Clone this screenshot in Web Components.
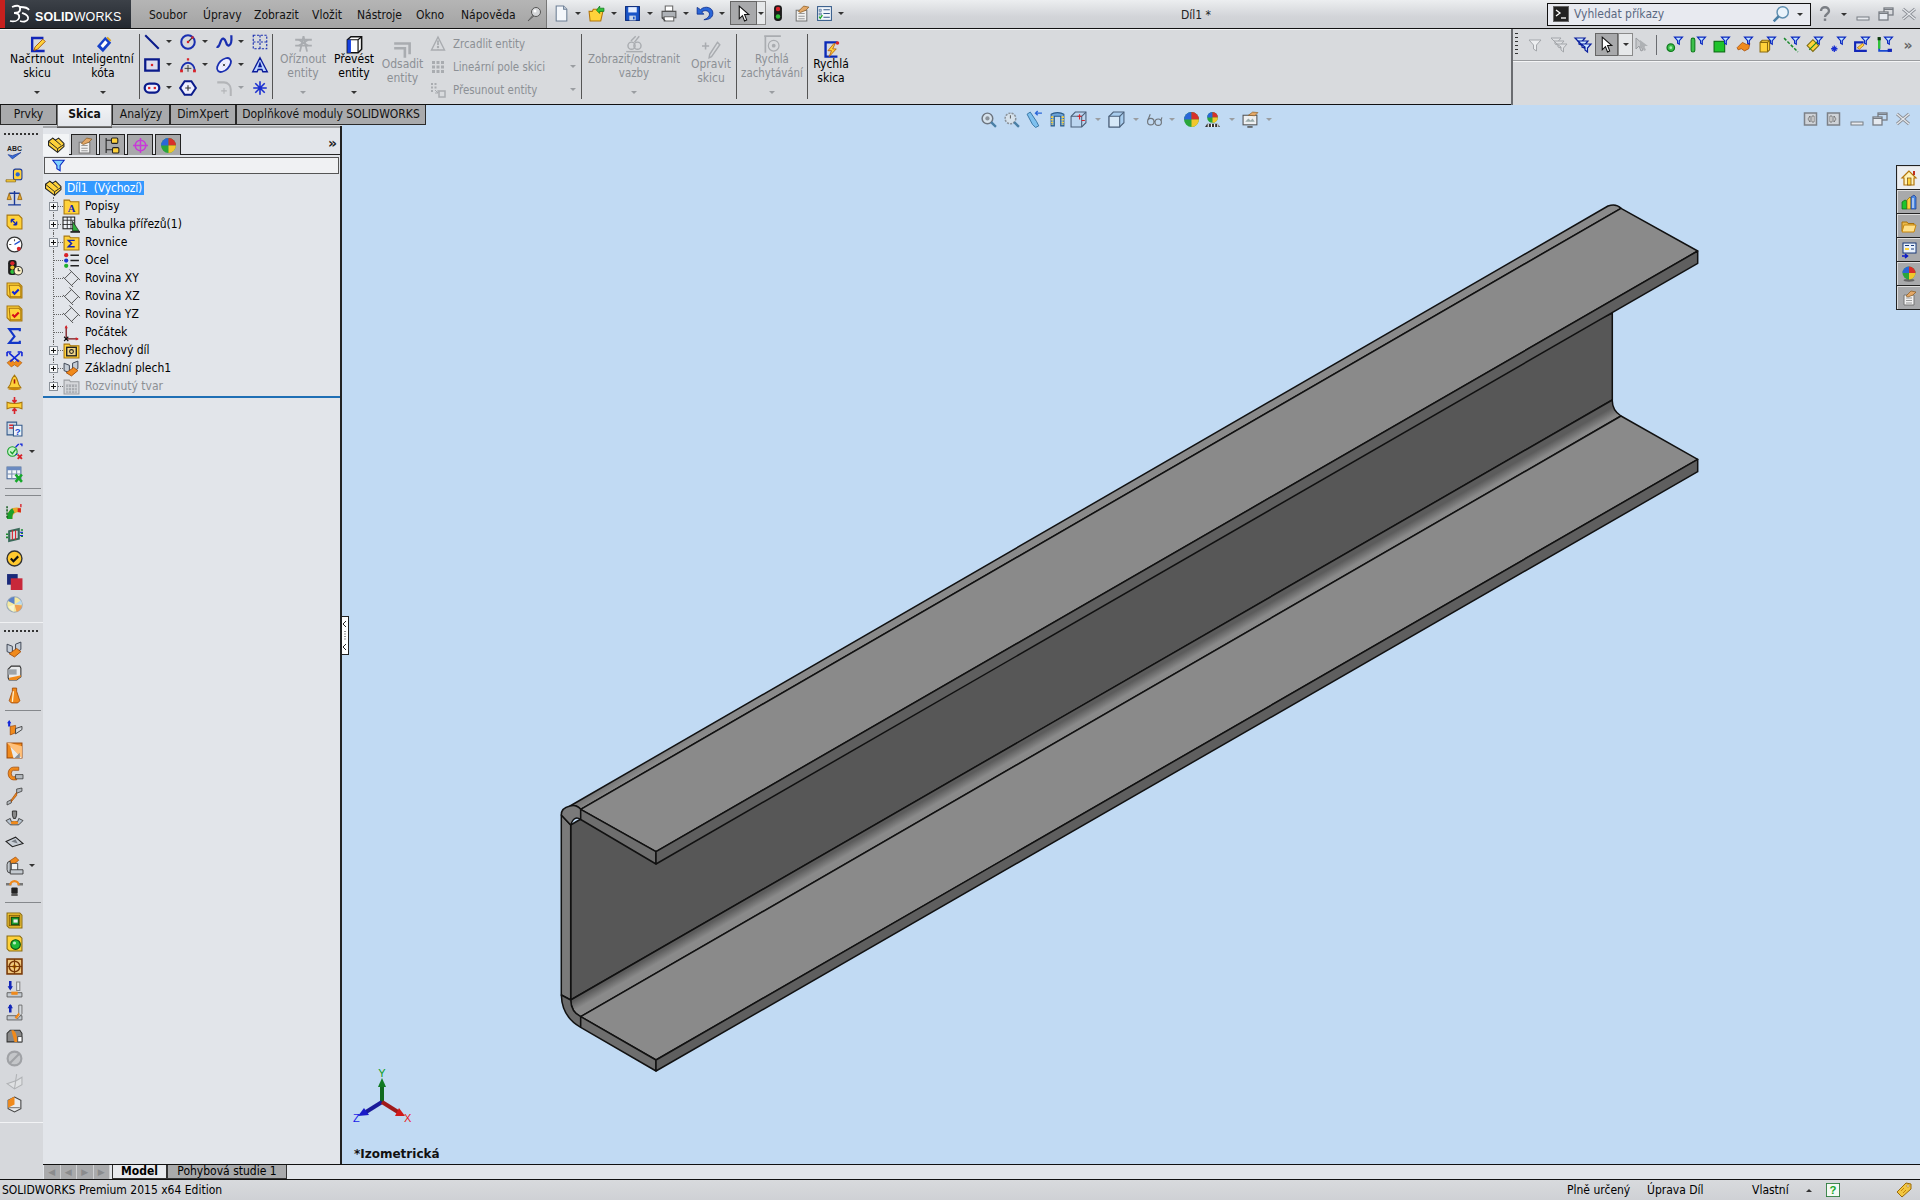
<!DOCTYPE html>
<html lang="cs">
<head>
<meta charset="utf-8">
<title>SOLIDWORKS</title>
<style>
  html, body { margin: 0; height: 100%; overflow: hidden; background: #d8dadd; }
  body { font: 12px "DejaVu Sans Condensed", "DejaVu Sans", sans-serif; color: #000; }
</style>
</head>
<body>

<sw-app>
  <sw-titlebar slot="title"></sw-titlebar>
  <sw-ribbon slot="ribbon"></sw-ribbon>
  <sw-filterbar slot="filter"></sw-filterbar>
  <sw-tabs slot="tabs"></sw-tabs>
  <sw-rail slot="rail">
    <sw-grip></sw-grip>
    <sw-tool name="abc"></sw-tool><sw-tool name="tape"></sw-tool><sw-tool name="scales"></sw-tool>
    <sw-tool name="section"></sw-tool><sw-tool name="gauge"></sw-tool><sw-tool name="lightclock"></sw-tool>
    <sw-tool name="chkblue"></sw-tool><sw-tool name="chkred"></sw-tool><sw-tool name="sigma"></sw-tool>
    <sw-tool name="cross"></sw-tool><sw-tool name="bell"></sw-tool><sw-tool name="squeeze"></sw-tool>
    <sw-tool name="docq"></sw-tool><sw-tool name="checkx" menu></sw-tool><sw-tool name="xltable"></sw-tool>
    <sw-rule style="margin-top:2px"></sw-rule><sw-rule style="margin-top:6px;margin-bottom:5px"></sw-rule>
    <sw-tool name="rainbow"></sw-tool><sw-tool name="greenbox"></sw-tool><sw-tool name="yescircle"></sw-tool>
    <sw-tool name="twosq"></sw-tool><sw-tool name="ball"></sw-tool>
    <sw-rule wide style="margin-top:6px"></sw-rule><sw-grip style="height:15px"></sw-grip>
    <sw-tool name="base"></sw-tool><sw-tool name="cube"></sw-tool><sw-tool name="cone"></sw-tool>
    <sw-rule style="margin-top:3px;margin-bottom:5px"></sw-rule>
    <sw-tool name="flangeup"></sw-tool><sw-tool name="miter"></sw-tool><sw-tool name="hem"></sw-tool>
    <sw-tool name="jog"></sw-tool><sw-tool name="form"></sw-tool><sw-tool name="diamond"></sw-tool>
    <sw-tool name="corner" menu></sw-tool><sw-tool name="clamp"></sw-tool>
    <sw-rule style="margin-top:2px;margin-bottom:6px"></sw-rule>
    <sw-tool name="yelgreen"></sw-tool><sw-tool name="yelball"></sw-tool><sw-tool name="vent"></sw-tool>
    <sw-tool name="unfold"></sw-tool><sw-tool name="fold"></sw-tool><sw-tool name="flatten"></sw-tool>
    <sw-tool name="nocut"></sw-tool><sw-tool name="ghostfold"></sw-tool><sw-tool name="hexorange"></sw-tool>
    <sw-rule wide style="margin-top:6px;background:#f2f3f5"></sw-rule>
  </sw-rail>
  <sw-tree slot="tree">
    <sw-tree-row root icon="part" label="Díl1  (Výchozí)"></sw-tree-row>
    <sw-tree-row plus icon="folderA" label="Popisy"></sw-tree-row>
    <sw-tree-row plus icon="cutlist" label="Tabulka přířezů(1)"></sw-tree-row>
    <sw-tree-row plus icon="folderS" label="Rovnice"></sw-tree-row>
    <sw-tree-row icon="material" label="Ocel"></sw-tree-row>
    <sw-tree-row icon="plane" label="Rovina XY"></sw-tree-row>
    <sw-tree-row icon="plane" label="Rovina XZ"></sw-tree-row>
    <sw-tree-row icon="plane" label="Rovina YZ"></sw-tree-row>
    <sw-tree-row icon="origin" label="Počátek"></sw-tree-row>
    <sw-tree-row plus icon="folderSheet" label="Plechový díl"></sw-tree-row>
    <sw-tree-row plus icon="base" label="Základní plech1"></sw-tree-row>
    <sw-tree-row plus last muted icon="flatgrey" label="Rozvinutý tvar"></sw-tree-row>
  </sw-tree>
  <sw-viewport slot="view"></sw-viewport>
  <sw-bottomtabs slot="bottom"></sw-bottomtabs>
  <sw-status slot="status"></sw-status>
</sw-app>

<script>
// all the small pictures, drawn on a 16 unit grid
const K = "#111", B = "#1226b8", Y = "#ffd23a", O = "#f08a1c", G = "#1fae2c", R = "#d8232a", W = "#fff", S = "#9aa0a6";
const funnel = `<path d="M8 1h7.5l-3 3.4v3.4l-1.6-1V4.4z" fill="#bfe3ff" stroke="#0a28c0" stroke-width="1.1"/>`;
const ICONS = {
  sketch: `<path d="M13 2.5H3.5v11H14" fill="none" stroke="${B}" stroke-width="2"/><path d="M6 10l6.5-6.5 2 2L8 12l-3 1z" fill="${Y}" stroke="#a8560c" stroke-width=".8"/>`,
  dim: `<path d="M9.5 1.5l5 5-7 8-5-5z" fill="#1540c8"/><path d="M9.5 4.5l2 2-4 4.500-2-2z" fill="${W}"/><path d="M11 2l3 3" stroke="#d9a21c" stroke-width="1.600"/>`,
  line: `<path d="M2 2l12 12" stroke="#0a1a8a" stroke-width="1.800"/>`,
  circle: `<circle cx="8" cy="8" r="6" fill="none" stroke="#1a2fb0" stroke-width="1.800"/><path d="M8 8l4-4" stroke="#333"/><rect x="7" y="7" width="2" height="2" fill="${R}"/><rect x="11" y="3" width="2" height="2" fill="${R}"/>`,
  spline: `<path d="M1.500 12c3 2 3-8 6-7s2 7 5 6 2-8 2-9" fill="none" stroke="#1a2fb0" stroke-width="2"/>`,
  dashed: `<rect x="2" y="2" width="12" height="12" fill="none" stroke="#1a2fb0" stroke-dasharray="2 1.300"/><path d="M2 8h12M8 2v12" stroke="#1a2fb0" stroke-dasharray="2 1.300"/>`,
  rect: `<rect x="2" y="3" width="12" height="10" fill="#dde" stroke="#0a1a8a" stroke-width="2"/><rect x="7" y="7" width="2" height="2" fill="${R}"/>`,
  arc: `<path d="M2 13a6 7 0 0 1 12 0" fill="none" stroke="#1a2fb0" stroke-width="1.600"/><path d="M8 8v6M5 11h6" stroke="#333" stroke-width=".8"/><rect x="1" y="12" width="2.500" height="2.500" fill="${R}"/><rect x="12.500" y="12" width="2.500" height="2.500" fill="${R}"/><rect x="7" y="2" width="2" height="2" fill="${R}"/>`,
  ellipse: `<ellipse cx="8" cy="8" rx="7.500" ry="4.500" transform="rotate(-45 8 8)" fill="#eef" stroke="#1a2fb0" stroke-width="1.600"/><path d="M7 7l2 2M9 7l-2 2" stroke="#444" stroke-width=".8"/>`,
  textA: `<path d="M8 1.500L14.500 14h-4L9.700 12H6.300l-.8 2h-4zM8 6.500l-1 3h2z" fill="#bcd4ff" stroke="#0a1a9a" stroke-width="1.200"/>`,
  slot: `<rect x="1.500" y="4" width="13" height="8" rx="4" fill="#eef" stroke="#0a1a8a" stroke-width="2"/><rect x="4.500" y="7" width="2" height="2" fill="${R}"/><rect x="9.500" y="7" width="2" height="2" fill="${R}"/>`,
  poly: `<path d="M5 2h6l4 6-4 6H5L1 8z" fill="#eef" stroke="#0a1a8a" stroke-width="1.800"/><path d="M8 5.500v5M5.500 8h5" stroke="#333"/>`,
  fillet: `<path d="M2 3h6a6 6 0 0 1 6 6v6" fill="none" stroke="#b3b5b8" stroke-width="1.800"/><path d="M8 8v5M5.500 10.500h5" stroke="#b3b5b8"/>`,
  star: `<path d="M8 2v12M2 8h12M3.800 3.800l8.400 8.400M12.200 3.800l-8.400 8.400" stroke="#1a2fd0" stroke-width="1.400"/>`,
  trim: `<g stroke="#a9acb0" fill="none" stroke-width="1.500"><path d="M1 4h14M1 9h14M8 1l-3 13M8 1l3 13"/><path d="M4 4l8 5M12 4l-8 5"/></g>`,
  convert: `<path d="M2 4l3-2.500h9V12l-3 3H2z" fill="${W}" stroke="#111" stroke-width="1.300"/><path d="M2 4h9v11M11 4l3-2.500" fill="none" stroke="#111"/><path d="M2 4h3v11H2z" fill="#1540e0"/>`,
  offset: `<path d="M1 3h13v9M1 7h9v8" fill="none" stroke="#a9acb0" stroke-width="2.200"/>`,
  mirror: `<path d="M8 1L1.500 14h13z" fill="none" stroke="#a9acb0" stroke-width="1.400"/><path d="M8 1v13" stroke="#a9acb0" stroke-dasharray="2 1"/><circle cx="8" cy="11" r="1.200" fill="#a9acb0"/><path d="M7.200 5h1.600v4H7.200z" fill="#a9acb0"/>`,
  pattern: `<g fill="#a9acb0"><rect x="2" y="2" width="3" height="3"/><rect x="6.500" y="2" width="3" height="3"/><rect x="11" y="2" width="3" height="3"/><rect x="2" y="6.500" width="3" height="3"/><rect x="6.500" y="6.500" width="3" height="3"/><rect x="11" y="6.500" width="3" height="3"/><rect x="2" y="11" width="3" height="3"/><rect x="6.500" y="11" width="3" height="3"/><rect x="11" y="11" width="3" height="3"/></g>`,
  moveent: `<g fill="#a9acb0"><rect x="1" y="1" width="2" height="2"/><rect x="4.500" y="1" width="2" height="2"/><rect x="1" y="4.500" width="2" height="2"/><rect x="4.500" y="4.500" width="2" height="2"/><rect x="1" y="8" width="2" height="2"/></g><rect x="9" y="9" width="6" height="6" fill="none" stroke="#a9acb0" stroke-width="1.500"/><path d="M5 8l3 3m0-3v3H5" fill="none" stroke="#a9acb0"/>`,
  relations: `<g fill="none" stroke="#a9acb0" stroke-width="1.200"><path d="M1 14h14"/><circle cx="5.500" cy="9" r="3"/><circle cx="10.500" cy="9" r="3"/><path d="M5 5L9 1M8 6l4-5"/></g>`,
  repair: `<path d="M3 2v6M0 5h6" stroke="#a9acb0" stroke-width="1.300"/><path d="M13 2l2 2-7 10-2 1 .5-3z" fill="none" stroke="#a9acb0" stroke-width="1.200"/>`,
  snap: `<path d="M1 1h14M2 1v14" stroke="#a9acb0" stroke-width="1.400"/><circle cx="9" cy="9" r="4.500" fill="none" stroke="#a9acb0"/><circle cx="9" cy="9" r="1.600" fill="#a9acb0"/>`,
  rapid: `<path d="M13 2H3v12h10" fill="none" stroke="#0a2ab8" stroke-width="2"/><path d="M10 3L5 9h3l-2 5 6-6.500H9l2-4.500z" fill="${Y}" stroke="#b55c0a" stroke-width=".7"/><circle cx="13" cy="2.500" r="1.500" fill="${R}"/>`,
  newdoc: `<path d="M3 1h7l3 3v11H3z" fill="#f4f7fb" stroke="#6d7f95"/><path d="M10 1v3h3" fill="#cfd8e3" stroke="#6d7f95"/>`,
  open: `<path d="M1 6h3l1-2h4l1 2h4l-2 9H2z" fill="${Y}" stroke="#b4760c"/><path d="M8 5l3-4v2h4v3h-4v2z" fill="#2fc23a" stroke="#0f7a1a" stroke-width=".7"/>`,
  save: `<rect x="1.500" y="1.500" width="13" height="13" fill="#1a55c8" stroke="#0a2a7a"/><rect x="4" y="2" width="8" height="5" fill="#e6efff"/><rect x="5" y="10" width="6" height="4.500" fill="#c8d4e6"/><rect x="8.500" y="11" width="1.500" height="2.500" fill="#1a55c8"/>`,
  print: `<path d="M4 1h7v5H4z" fill="${W}" stroke="#666"/><path d="M1 6h13v6H1z" fill="#aeb2b7" stroke="#555"/><path d="M3 11h9v4H3z" fill="${W}" stroke="#666"/><path d="M1 12l3 3" stroke="#444"/>`,
  undo: `<path d="M1 3v6h6L5 7c3-2 7-1 7 2 0 2-2 4-5 5 5 0 8-2 8-6 0-5-7-7-11-3z" fill="#2a66d8" stroke="#0a2a8a" stroke-width=".7"/>`,
  cursor: `<path d="M4 1v12l3-3 2 5 2-1-2-5h4z" fill="${W}" stroke="#111"/>`,
  light: `<rect x="4.500" y="1" width="7" height="14" rx="3" fill="#1b1b1b"/><circle cx="8" cy="4.500" r="2" fill="#d8232a"/><circle cx="8" cy="11" r="2" fill="#2fc23a"/>`,
  options: `<path d="M3 5h10v10H3z" fill="#f1f1f1" stroke="#777"/><path d="M5 8h6M5 10.500h6M5 13h6" stroke="#999"/><path d="M5 6l5-5 5 1-3 3-5 2z" fill="#e3a868" stroke="#8a5a20" stroke-width=".7"/>`,
  checklist: `<rect x="1.500" y="1.500" width="13" height="13" fill="#f2f6fb" stroke="#345a8a"/><path d="M7 4.500h6M7 8h6M7 11.500h6" stroke="#345a8a"/><path d="M3 4h2v2H3zM3 7.500h2v2H3z" fill="#bcd" stroke="#345a8a" stroke-width=".5"/><path d="M3 11l1 1.500 2-3" fill="none" stroke="${G}" stroke-width="1.300"/>`,
  pin: `<circle cx="10" cy="6" r="4.500" fill="#d4d6d8" stroke="#555"/><path d="M7 9l-5 6 6-5" fill="#888" stroke="#555" stroke-width=".7"/><circle cx="9" cy="5" r="1.500" fill="${W}"/>`,
  terminal: `<rect x=".5" y=".5" width="15" height="15" fill="#222" stroke="#666"/><path d="M3 4l4 3-4 3" fill="none" stroke="${W}" stroke-width="1.300"/><path d="M8 12h5" stroke="${W}" stroke-width="1.300"/>`,
  search: `<circle cx="9.500" cy="6.500" r="5" fill="#e9f3fb" stroke="#5f8fb0" stroke-width="1.300"/><path d="M6 10l-4.500 4.500" stroke="#4a7fa5" stroke-width="2.200"/>`,
  help: `<path d="M4 5c0-5 8-5 8 0 0 3-4 3-4 6" fill="none" stroke="#7a7e84" stroke-width="2.400"/><rect x="6.800" y="12.500" width="2.400" height="2.400" fill="#7a7e84"/>`,
  winmin: `<rect x="2" y="11" width="12" height="3" fill="#e8eaee" stroke="#777c83"/>`,
  winmax: `<rect x="6" y="2" width="9" height="7" fill="none" stroke="#777c83" stroke-width="1.300"/><rect x="1" y="6" width="9" height="8" fill="#e6eaf0" stroke="#777c83" stroke-width="1.300"/><path d="M1 7.500h9M6 3.500h9" stroke="#777c83"/>`,
  winx: `<path d="M2 3l12 10M14 3L2 13" stroke="#8c9097" stroke-width="3"/><path d="M2 3l12 10M14 3L2 13" stroke="#e6e8ec" stroke-width="1.200"/>`,
  panelL: `<rect x="1.500" y="2" width="12" height="12" fill="#cfd3d8" stroke="#7c8188" stroke-width="1.500"/><path d="M7 5L5 8l2 3zM9 5h2v6H9z" fill="${W}" stroke="#555" stroke-width=".7"/>`,
  panelR: `<rect x="1.500" y="2" width="12" height="12" fill="#cfd3d8" stroke="#7c8188" stroke-width="1.500"/><path d="M8 5l2 3-2 3zM4 5h2v6H4z" fill="${W}" stroke="#555" stroke-width=".7"/>`,
  fgrey: `<path d="M2 3h12l-4.500 5v6l-3-2V8z" fill="#eceef0" stroke="#a3a6aa"/>`,
  fgrey2: `<g fill="#dfe1e4" stroke="#a3a6aa"><path d="M0 1h10L6.500 5v3L4 7V5z"/><path d="M3 4h10L9.500 8v3L7 10V8z"/><path d="M6 7h10l-3.500 4v4L10 13v-3z"/></g>`,
  fblue: `<g fill="#cfe9ff" stroke="#0a1f9e" stroke-width="1.200"><path d="M0 1h10L6.500 5v3L4 7V5z"/><path d="M3 4h10L9.500 8v3L7 10V8z"/><path d="M6 7h10l-3.500 4v4L10 13v-3z"/></g>`,
  cursorg: `<path d="M2 1v11l3-3 2 5 2-1-2-4h4z" fill="#c6c8cb" stroke="#9a9da1"/><path d="M6 3v9l2-2 2 4 2-1-2-4h4z" fill="#aeb1b4"/>`,
  fvertex: `<circle cx="4.500" cy="11" r="3.500" fill="#3cc04a" stroke="#0e7a1c" stroke-width="1.200"/><circle cx="4.500" cy="11" r="1.300" fill="#a8eeb0"/>${funnel}`,
  fedge: `<rect x="2" y="2" width="3.500" height="13" rx="1.700" fill="#3cc04a" stroke="#0e7a1c"/>${funnel}`,
  fface: `<rect x="1" y="5" width="10" height="10" fill="#1fc42c" stroke="#0a6a12"/>${funnel}`,
  fflag: `<path d="M1 11l5-5 4 2 3-1-1 5-4 2-3-2-3 1z" fill="${O}" stroke="#a04a08" stroke-width=".7"/>${funnel}`,
  fbody: `<path d="M1 6l2-2h7v9l-2 2H1z" fill="${Y}" stroke="#8a6a10"/><path d="M1 6h7v9M8 6l2-2" fill="none" stroke="#8a6a10"/>${funnel}`,
  faxis: `<path d="M1 2l13 13" stroke="#1a8a2c" stroke-width="1.400" stroke-dasharray="3 1.500"/>${funnel}`,
  fplane: `<path d="M1 9l5.500-5.500L12 9l-5.500 5.500z" fill="${Y}" stroke="#7a6a10"/><path d="M3 13L11 5" stroke="#168a28"/>${funnel}`,
  fstar: `<path d="M5 9v6M2 12h6M3 10l4 4M7 10l-4 4" stroke="#1a2fd0" stroke-width="1.200"/>${funnel}`,
  fsketch: `<path d="M10 6H2v8h11" fill="none" stroke="#1226b8" stroke-width="2"/><path d="M4 11l5-4 1.500 1.500L6 12.500z" fill="${Y}" stroke="#a8560c" stroke-width=".6"/>${funnel}`,
  fpath: `<path d="M3 2v12h10" fill="none" stroke="#1a4ad0" stroke-width="1.800"/><path d="M3 2v10" stroke="#2fc23a" stroke-width="2.200"/><rect x="1.500" y="1" width="3" height="3" fill="#0a3a0a"/><rect x="11" y="12" width="4" height="3" fill="#1226b8"/>${funnel}`,
  zfit: `<circle cx="7" cy="7" r="5" fill="#d6e2ec" stroke="#6e7680" stroke-width="1.400"/><circle cx="7" cy="7" r="2" fill="#8b939b"/><path d="M10.500 10.500l4.500 4.500" stroke="#4a7fa5" stroke-width="2.200"/>`,
  zarea: `<circle cx="7" cy="7" r="5" fill="#d6e2ec" stroke="#8b939b" stroke-width="1.400" stroke-dasharray="2 1"/><path d="M7 4v3" stroke="#666"/><path d="M10.500 10.500l4.500 4.500" stroke="#4a7fa5" stroke-width="2.200"/>`,
  prevview: `<path d="M1 3l3-2 6 9 2 4-3 1.500-3-3z" fill="#7ec0ee" stroke="#2a6a9a" stroke-width=".8"/><path d="M15 2H9m2-2L9 2l2 2" fill="none" stroke="#2a66d8" stroke-width="1.300"/>`,
  sectionv: `<path d="M2 3c3-2 9-2 12 0v11h-3V5H5v9H2z" fill="#6ea4d8" stroke="#2a5a8a"/><path d="M3 5v8M13 5v8" stroke="${Y}" stroke-width="2" stroke-dasharray="1.500 1"/>`,
  orient: `<path d="M1 5l4-4h10v10l-4 4H1z" fill="#bcd6f0" stroke="#4a5f78"/><path d="M1 5h10v10M11 5l4-4" fill="none" stroke="#4a5f78"/><path d="M9 3v5M7 5h4M11 9h3" stroke="${R}"/>`,
  display: `<path d="M1 5l4-4h10v10l-4 4H1z" fill="#a8cdee" stroke="#4a5f78"/><path d="M1 5h10v10H1z" fill="#d6e8f7" stroke="#4a5f78"/><path d="M11 5l4-4" stroke="#4a5f78"/>`,
  glasses: `<g fill="none" stroke="#70767c" stroke-width="1.100"><circle cx="4.500" cy="10" r="3"/><circle cx="11.500" cy="10.500" r="3"/><path d="M7.500 10h1M2 8l2-5M14 9l1-3"/></g>`,
  appear: `<circle cx="8" cy="8" r="7" fill="#2aa63a"/><path d="M8 8V1a7 7 0 0 0-7 7z" fill="#2a66d8"/><path d="M8 8V1a7 7 0 0 1 7 7z" fill="#d8302a"/><path d="M8 8h7a7 7 0 0 1-7 7z" fill="#f2c62c"/>`,
  scene: `<circle cx="8" cy="6" r="5" fill="#2aa63a"/><path d="M8 6V1a5 5 0 0 0-5 5z" fill="#2a66d8"/><path d="M8 6V1a5 5 0 0 1 5 5z" fill="#d8302a"/><path d="M8 6h5a5 5 0 0 1-5 5z" fill="#f2c62c"/><path d="M1 15l2-3h10l2 3z" fill="#333"/><path d="M4 12v3M7 12v3M10 12v3M13 12v3" stroke="${W}"/>`,
  viewset: `<rect x="1" y="4" width="13" height="9" fill="#eef0f2" stroke="#555"/><path d="M5 15h5" stroke="#555" stroke-width="1.500"/><path d="M3 10l3-3 2 2 2-2 2 3z" fill="#9aa"/><path d="M6 4l4-3 5 .5-3 3z" fill="#e3a868" stroke="#8a5a20" stroke-width=".6"/>`,
  home: `<path d="M8 1L1 8h2v7h10V8h2z" fill="#fff2b8" stroke="#b4760c" stroke-width="1.200"/><rect x="6.500" y="8" width="3.500" height="7" fill="${Y}" stroke="#7a4a08" stroke-width=".7"/><rect x="12" y="1" width="2" height="4" fill="#c03020"/>`,
  books: `<path d="M1 8l3-2 2 1v8H1z" fill="#1fc42c" stroke="#0a6a12" stroke-width=".7"/><path d="M6 6l3-3 1 1v11H6z" fill="${Y}" stroke="#8a6a10" stroke-width=".7"/><path d="M10 3l3-2 2 2v12h-5z" fill="#4a86e0" stroke="#1a3a8a" stroke-width=".7"/><path d="M12 4v10" stroke="${W}"/>`,
  folder: `<path d="M1 4h5l1 1.500h6V13H1z" fill="#e8b84a" stroke="#a8700a"/><path d="M3 7h12l-2 7H1z" fill="#ffe08a" stroke="#c8860a"/>`,
  design: `<rect x="2" y="1" width="13" height="10" fill="#e8f0fa" stroke="#1a3a7a"/><path d="M4 3.500h4M10 3.500h3M10 7h3" stroke="#1a3a7a"/><path d="M4 6h4v2H4z" fill="${Y}"/><path d="M1 14h5m-2-2l2.500 2L4 16" stroke="#0a1ac8" stroke-width="1.500" fill="none"/>`,
  ballsh: `<ellipse cx="8" cy="14.300" rx="5.500" ry="1.400" fill="#666"/><circle cx="8" cy="7" r="6.500" fill="#2aa63a"/><path d="M8 7V.5A6.500 6.500 0 0 0 1.500 7z" fill="#2a66d8"/><path d="M8 7V.5A6.500 6.500 0 0 1 14.500 7z" fill="#d8302a"/><path d="M8 7h6.500A6.500 6.500 0 0 1 8 13.500z" fill="#f2c62c"/>`,
  abc: `<text x="8" y="7" font-size="6.500" font-family="Liberation Sans" font-weight="700" text-anchor="middle" fill="#222">ABC</text><path d="M2 10l4 4 8-6-8 3z" fill="#3a6ed8" stroke="#1a3a9a" stroke-width=".7"/>`,
  tape: `<rect x="7" y="2" width="8" height="10" rx="2" fill="${Y}" stroke="#1a3a9a"/><circle cx="11" cy="7" r="2" fill="#2a66d8"/><path d="M0 12h9v2H0z" fill="${Y}" stroke="#7a5a08" stroke-width=".6"/>`,
  scales: `<path d="M8 1v13M2 14h12M3 3h10" stroke="#1a3a9a" stroke-width="1.300"/><path d="M1 9l2-6 2 6zM11 9l2-6 2 6z" fill="#e8a82c" stroke="#8a5a08" stroke-width=".7"/>`,
  section: `<path d="M1 2h11l3 3v10H4L1 12z" fill="${Y}" stroke="#a8760c"/><path d="M5 6l5 5M5 6h3M5 6v3M10 11V8M10 11H7" fill="none" stroke="#1226b8" stroke-width="1.300"/>`,
  gauge: `<circle cx="8" cy="8" r="7" fill="${W}" stroke="#333" stroke-width="1.200"/><path d="M8 8l5-3" stroke="#1a4ad0" stroke-width="1.300"/><circle cx="12" cy="12" r="1.800" fill="${R}"/><path d="M3 8h2M8 3v2" stroke="#555"/>`,
  lightclock: `<rect x="2" y="1" width="8" height="14" rx="3" fill="#1d1d1d"/><circle cx="6" cy="4" r="2" fill="${R}"/><circle cx="6" cy="8" r="2" fill="#e3c12c"/><circle cx="6" cy="12" r="2" fill="#2fc23a"/><circle cx="11.500" cy="11" r="4" fill="#fff4c8" stroke="#333"/><path d="M11.500 8.500V11h2" fill="none" stroke="#333"/>`,
  chkblue: `<path d="M1 1h11l3 3v11H4L1 12z" fill="${Y}" stroke="#a8760c"/><path d="M3 3h9l2 2v9H4z" fill="${Y}" stroke="#a8760c"/><path d="M6 9l2 2 4-4" fill="none" stroke="#1226d8" stroke-width="2"/>`,
  chkred: `<path d="M1 1h11l3 3v11H4L1 12z" fill="${Y}" stroke="#a8760c"/><path d="M3 3h9l2 2v9H4z" fill="${Y}" stroke="#a8760c"/><path d="M6 9l2 2 4-4" fill="none" stroke="#d8101a" stroke-width="2"/>`,
  sigma: `<path d="M13 3V1H3l5 7-5 6h10v-2" fill="none" stroke="#1236c8" stroke-width="2"/>`,
  cross: `<path d="M1 11l4-3 3 3 3-3 4 3-4 4-3-2-3 2z" fill="${O}" stroke="#a8560c" stroke-width=".6"/><path d="M3 2l9 8M13 2l-9 8" stroke="#1226d8" stroke-width="1.500"/><path d="M1 1h4M1 1v4M15 1h-4M15 1v4" stroke="#1226d8" stroke-width="1.500"/>`,
  bell: `<path d="M8 1C5 4 5 7 4 10l-2 3h12l-2-3c-1-3-1-6-4-9z" fill="${Y}" stroke="#a8760c"/><path d="M8 5v4" stroke="#a8160c" stroke-width="1.500"/><ellipse cx="8" cy="14" rx="6" ry="1.300" fill="#c8860a"/>`,
  squeeze: `<path d="M1 5c3 1.500 11 1.500 14 0v6c-3-1.500-11-1.500-14 0z" fill="${Y}" stroke="#a8760c"/><path d="M8 0v5M6 3l2 2 2-2M8 16v-5M6 13l2-2 2 2" fill="none" stroke="${R}" stroke-width="1.500"/>`,
  docq: `<path d="M1 2h9v12H1z" fill="#cdd9e6" stroke="#345a8a"/><path d="M3 5h4M3 7.500h4" stroke="${R}" stroke-width="1.400"/><path d="M7 5h8v10H7z" fill="#eef3f9" stroke="#345a8a"/><text x="11" y="14" font-size="9" font-family="Liberation Sans" font-weight="700" text-anchor="middle" fill="#1a4ad0">?</text>`,
  checkx: `<circle cx="6" cy="8" r="4.500" fill="#c8f2cc" stroke="#1aa02c"/><path d="M4 8l2 2 3-4" fill="none" stroke="#1aa02c" stroke-width="1.300"/><path d="M9 4l3-3M13 1h2v2" stroke="#1226d8" stroke-width="1.200" fill="none"/><path d="M11 11l4 4M15 11l-4 4" stroke="${R}" stroke-width="1.800"/><path d="M9 11l2-1" stroke="#1226d8"/>`,
  xltable: `<rect x="1" y="1" width="13" height="11" fill="#f2f5f9" stroke="#4a6a9a"/><rect x="1" y="1" width="13" height="3" fill="#6a8ac0"/><path d="M1 7.500h13M5.500 4v8M10 4v8" stroke="#7a90b0"/><path d="M9 8l6 7M15 8l-6 7" stroke="#16a82a" stroke-width="2.400"/>`,
  rainbow: `<path d="M1 14c0-9 6-12 13-10v4C9 7 6 9 6 14z" fill="#e8a82c"/><path d="M1 14c0-5 2-8 5-10l2 4C6 9 6 11 6 14z" fill="#1aa02c"/><path d="M11 4l3 0v4l-3-.5z" fill="#d8231a"/><path d="M1 2v12" stroke="#0f5a1a" stroke-width="1.400" stroke-dasharray="2 1"/><path d="M14 0v3" stroke="${R}" stroke-width="1.300"/>`,
  greenbox: `<path d="M3 4l9-2v9l-9 2z" fill="none" stroke="#3a6a5a" stroke-width="2"/><path d="M6 3v9M9 3v9" stroke="${R}"/><path d="M1 6v6M15 2v8" stroke="#1a8a2c" stroke-dasharray="1.500 1.500" stroke-width="2"/><path d="M13 5h3M13 8h3" stroke="#1226d8"/>`,
  yescircle: `<circle cx="8" cy="8" r="7" fill="#ffc92e" stroke="#333" stroke-width="1.300"/><path d="M4.500 8l2.500 2.500 4.500-4.500" fill="none" stroke="#111" stroke-width="2"/>`,
  twosq: `<rect x="1" y="1" width="10" height="10" fill="#1a2a7a"/><rect x="4.500" y="5" width="11" height="11" fill="#c8283a"/>`,
  ball: `<circle cx="8" cy="8" r="7.300" fill="#f4e9a0" stroke="#9ab"/><path d="M8 .7a7.300 7.300 0 0 0-6 4l6 3z" fill="#5a80c8"/><path d="M8 8l7 1a7 7 0 0 1-5 6z" fill="#f0a050"/><path d="M2 10l6-2-1 7z" fill="#f8f4d0"/><path d="M8 8l6-4a7 7 0 0 1 1 4z" fill="#b8d8f0"/>`,
  base: `<path d="M1 3l5 2v7l-5-2zM9 3l5-2v7l-5 3z" fill="#c4ccd6" stroke="#3a4250" stroke-width=".9"/><path d="M3 12l5 3 6-5-4-3z" fill="${O}" stroke="#a04a08" stroke-width=".8"/>`,
  cube: `<path d="M5 2h8l1 2v8l-4 3H3l-1-2V5z" fill="#e8eaec" stroke="#333"/><path d="M2 5h8v5H2z" fill="#9ea4aa"/><path d="M3 13l7-1.500 4-1v1.500l-4 3H3z" fill="${O}"/>`,
  cone: `<path d="M6 1h4v3l3 9-2 2H5l-2-2 3-9z" fill="${O}" stroke="#a04a08" stroke-width=".8"/><path d="M7 4L6 14" stroke="#fff3d0" stroke-width="1.200"/>`,
  flangeup: `<path d="M3 1l2 3H4v3H2V4H1z" fill="#1226d8"/><path d="M4 7l5-1v7l-5 2z" fill="${O}" stroke="#a04a08" stroke-width=".7"/><path d="M9 9l6-2v3l-6 4z" fill="#d4d8dc" stroke="#333" stroke-width=".8"/>`,
  miter: `<rect x="1" y="1" width="14" height="14" fill="${O}" stroke="#a04a08"/><path d="M1 1l14 14V4L4 1z" fill="#ffc07a"/><path d="M4 4l11 11H7z" fill="#e8eaec"/><path d="M13 10v5h-5z" fill="#8a8f94"/>`,
  hem: `<path d="M12 2H7a5 6 0 0 0 0 12h3v-3H7a2 3 0 0 1 0-6h5z" fill="${O}" stroke="#a04a08" stroke-width=".7"/><path d="M9 9h7v4H9z" fill="#b4b9be" stroke="#333" stroke-width=".7"/>`,
  jog: `<path d="M1 13l4-2v3l-4 2zM10 1l5-1v3l-5 2z" fill="#b4b9be" stroke="#333" stroke-width=".7"/><path d="M5 11l5-7v3l-5 6z" fill="${O}" stroke="#a04a08" stroke-width=".7"/>`,
  form: `<path d="M6 0h4v4l-1 3H7L6 4z" fill="#888" stroke="#222" stroke-width=".8"/><path d="M0 9l4 4h8l4-4-4-2-1 3H5L4 7z" fill="#b8c4d0" stroke="#333" stroke-width=".8"/><ellipse cx="8" cy="11" rx="3.500" ry="1.500" fill="${O}"/>`,
  diamond: `<path d="M0 7l9-4 7 6-10 3z" fill="#c8ced6" stroke="#222"/><path d="M5 7l4-2 2 4z" fill="#767c84"/>`,
  corner: `<path d="M3 4l6-4 3 3-6 5z" fill="${O}" stroke="#a04a08" stroke-width=".7"/><path d="M1 7a3 3 0 0 1 3-3v11a3 3 0 0 1-3-3z" fill="#c4cad0" stroke="#333" stroke-width=".8"/><path d="M5 6h6v7H5z" fill="#eef0f2" stroke="#333" stroke-width=".8"/><path d="M4 12h12v4H4z" fill="#c4cad0" stroke="#333" stroke-width=".8"/>`,
  clamp: `<path d="M0 4h5M11 4h5" stroke="#777" stroke-width="2.400"/><path d="M4 5a4 4 0 0 1 8 0" fill="none" stroke="${O}" stroke-width="2"/><rect x="5" y="7" width="6" height="6" rx="1" fill="#222"/><path d="M5 13h6v2H5z" fill="#555"/>`,
  yelgreen: `<path d="M1 1h12l2 2v12H3L1 13z" fill="${Y}" stroke="#8a6a10"/><path d="M3 3h10v10H3z" fill="#f0a820" stroke="#7a5a08"/><rect x="5" y="5" width="7" height="7" fill="#1a9a2c" stroke="#0a4a12"/><rect x="7" y="7" width="4" height="3" fill="#eee"/>`,
  yelball: `<path d="M1 1h12l2 2v12H3L1 13z" fill="${Y}" stroke="#8a6a10"/><circle cx="9" cy="9" r="4.500" fill="#1fb83a" stroke="#0a4a12"/><circle cx="8" cy="7.500" r="1.500" fill="#b8f0c0"/>`,
  vent: `<rect x="1" y="1" width="14" height="14" fill="#f0c880" stroke="#7a3a08" stroke-width="1.500"/><circle cx="8" cy="8" r="5" fill="none" stroke="#7a3a08" stroke-width="1.500"/><circle cx="8" cy="8" r="2" fill="#c8860a"/><path d="M8 1v14M1 8h14" stroke="#7a3a08"/>`,
  unfold: `<path d="M4 0v7" stroke="#1226b8" stroke-width="2.400"/><path d="M1.500 5L4 9l2.500-4z" fill="#1226b8"/><path d="M10 1h3v8h-3z" fill="#e8eaec" stroke="#888"/><path d="M1 11h14v4H1z" fill="#c4cad0" stroke="#555" stroke-width=".8"/><rect x="5" y="10" width="6" height="3" fill="${O}"/>`,
  fold: `<path d="M4 8V1" stroke="#1226b8" stroke-width="2.400"/><path d="M1.500 4L4 0l2.500 4z" fill="#1226b8"/><path d="M1 11h14v4H1z" fill="#c4cad0" stroke="#555" stroke-width=".8"/><path d="M9 12l3-3V1h3v8l-4 5z" fill="#d4d8dc" stroke="#555" stroke-width=".7"/><path d="M8 13l4-5 1 2-3 4z" fill="${O}"/>`,
  flatten: `<path d="M1 6l3-3h9l2 3v8H1z" fill="#888" stroke="#333"/><path d="M7 3c3 2 3 6 4 11h-3C7 10 6 7 5 3z" fill="${O}"/><path d="M11 9h4v5h-4z" fill="${W}" stroke="#333" stroke-width=".7"/>`,
  nocut: `<circle cx="8" cy="8" r="6.500" fill="#c4c6c9" stroke="#a0a2a6" stroke-width="2"/><path d="M3.500 12.500l9-9" stroke="#a0a2a6" stroke-width="2"/>`,
  ghostfold: `<path d="M1 10l7 5 7-4v-7l-5 3z" fill="#dfe1e3" stroke="#b0b2b5"/><path d="M10 1l-2 14" stroke="#b0b2b5"/>`,
  hexorange: `<path d="M8 1l6 3v8l-6 3-6-3V4z" fill="#e8eaec" stroke="#444"/><path d="M2 4c2-1 4-3 6-3v7l-6 3z" fill="${O}"/><path d="M3 11h10" stroke="#777"/>`,
  part: `<path d=".500 0" fill="none"/><path d="M.500 4l4-3 2.500 2 3-2 5 5v3l-6 5.500L.500 8z" fill="${Y}" stroke="#222"/><path d="M.500 4L9 11v3.500M9 11l6-4M4.500 1L12 7.500" fill="none" stroke="#222" stroke-width=".9"/>`,
  folderA: `<path d="M1 2h5l1 1.500h8V15H1z" fill="${Y}" stroke="#a8760c"/><text x="8" y="13" font-size="10" font-family="Liberation Serif" font-weight="700" text-anchor="middle" fill="#1226b8">A</text>`,
  cutlist: `<rect x="0" y="1" width="11" height="11" fill="#eef2f7" stroke="#222"/><path d="M0 4h11M0 8h11M4 1v11M7.500 1v11" stroke="#222" stroke-width=".8"/><path d="M9 5v9h6z" fill="#2fae3a" stroke="#222" stroke-width=".7"/><path d="M7 15h9" stroke="#111" stroke-width="1.500"/>`,
  folderS: `<path d="M1 2h5l1 1.500h8V15H1z" fill="${Y}" stroke="#a8760c"/><path d="M11 6H5l3 3-3 3h6" fill="none" stroke="#1226b8" stroke-width="1.400"/>`,
  material: `<circle cx="3" cy="3" r="2" fill="${R}"/><circle cx="3" cy="8" r="2" fill="#1a3ad0"/><circle cx="3" cy="13" r="2" fill="#1fb02c"/><path d="M7 3h8M7 8h8M7 13h8" stroke="#222" stroke-width="1.500"/>`,
  plane: `<path d="M8 1.500L14.500 8 8 14.500 1.500 8z" fill="none" stroke="#222" stroke-width=".7"/><path d="M6 -.500l2 2M14.500 8l1.500 1.500M1.500 8l-1.500-1.500M8 14.500l1.500 1.500" stroke="#222" stroke-width=".7"/>`,
  origin: `<path d="M3 2v12h11" fill="none" stroke="#7a1216" stroke-width="1.200"/><path d="M1.500 4L3 1l1.500 3zM12 12.500l3 1.500-3 1.500z" fill="${R}"/><path d="M1 12l4 4M5 12l-4 4" stroke="#111"/>`,
  folderSheet: `<path d="M1 2h5l1 1.500h8V15H1z" fill="${Y}" stroke="#a8760c"/><rect x="3.500" y="5" width="9" height="8" fill="#f2d88a" stroke="#222" stroke-width="1.300"/><circle cx="8" cy="9" r="1.800" fill="none" stroke="#222"/>`,
  flatgrey: `<path d="M1 2h5l1 1.500h8V15H1z" fill="#d6d8dc" stroke="#9a9da1"/><path d="M3 6h10v8H3z" fill="#a8abb0"/><path d="M5 6v8M8 6v8M11 6v8M3 9h10M3 12h10" stroke="#d6d8dc" stroke-width=".8"/>`,
  fieldfilter: `<path d="M1 1.500h14L10 8v6.500L6 12V8z" fill="#7fd2ff" stroke="#0a28c0" stroke-width="1.300"/>`,
  tConfig: `<g fill="${Y}" stroke="#222"><rect x="7" y="1" width="6" height="5" rx="1"/><rect x="8" y="10" width="6" height="5" rx="1"/></g><path d="M2 1v14M2 3h5M2 12h6" fill="none" stroke="#222"/>`,
  tTarget: `<circle cx="8" cy="8" r="5" fill="none" stroke="#c83ad8" stroke-width="1.400"/><path d="M8 1v14M1 8h14" stroke="#c83ad8" stroke-width="1.400"/>`,
  question: `<rect x=".5" y=".5" width="15" height="15" fill="#f4f9f4" stroke="#2a7a3a"/><text x="8" y="13" font-size="13" font-family="Liberation Sans" font-weight="700" text-anchor="middle" fill="#18a82a">?</text>`,
  tag: `<path d="M1 10L10 1l5 1 0 5-9 8z" fill="#f2c640" stroke="#9a6a08"/><circle cx="12" cy="4" r="1.200" fill="${W}" stroke="#9a6a08" stroke-width=".6"/><path d="M5 9l3-3M7 11l3-3" stroke="#c8860a"/>`
};

// small helper so each class can declare its shadow in one go
function shadow(el, css, html) {
  const root = el.attachShadow({ mode: "open" });
  root.innerHTML = `<style>${css}</style>${html}`;
  return root;
}

class SwIcon extends HTMLElement {
  connectedCallback() {
    if (this.shadowRoot) return;
    const size = this.getAttribute("size") || 16;
    shadow(this, `:host { display: inline-flex; width: ${size}px; height: ${size}px; flex: none; } svg { display: block; overflow: visible; }`,
      `<svg width="${size}" height="${size}" viewBox="0 0 16 16">${ICONS[this.getAttribute("name")] || ""}</svg>`);
  }
}
customElements.define("sw-icon", SwIcon);

class SwArrow extends HTMLElement {
  connectedCallback() {
    if (this.shadowRoot) return;
    const up = this.hasAttribute("up");
    const off = this.hasAttribute("off");
    const c = off ? "#9a9da1" : "#333";
    shadow(this, `
      :host { display: flex; align-items: center; justify-content: center; flex: none; }
      i { width: 0; height: 0; border: 3px solid transparent; ${up ? `border-bottom-color:${c}; border-top-width:0` : `border-top-color:${c}; border-bottom-width:0`}; border-left-width: 3.500px; border-right-width: 3.500px; }`,
      `<i></i>`);
  }
}
customElements.define("sw-arrow", SwArrow);

class SwTitlebar extends HTMLElement {
  constructor() {
    super();
    const menus = [["Soubor", 54], ["Úpravy", 51], ["Zobrazit", 58], ["Vložit", 45], ["Nástroje", 59], ["Okno", 45], ["Nápověda", 65]];
    shadow(this, `
      :host { display: flex; height: 28px; border-bottom: 1px solid #111; background: linear-gradient(#eceef0, #d2d4d8 60%, #cfd1d5); align-items: center; }
      .logo { width: 126px; height: 100%; border-left: 5px solid #c8201e; background: linear-gradient(#3c4148, #23282f); display: flex; align-items: center; color: #fff; flex: none; }
      .logo svg { margin: 0 4px 0 4px; }
      .logo span { font: 700 12.500px "Liberation Sans", sans-serif; margin-top: 6px; letter-spacing: .1px; white-space: nowrap; }
      .logo b { font-weight: 400; }
      .menu { width: 416px; height: 100%; padding-left: 18px; box-sizing: border-box; flex: none; display: flex; align-items: center; background: linear-gradient(#b5b5b5, #a4a4a4); border-right: 1px solid #777; color: #111; }
      .menu span { flex: none; padding-top: 2px; }
      .quick { display: flex; align-items: center; height: 100%; padding: 0 0 2px 4px; box-sizing: border-box; }
      .c { display: flex; justify-content: center; align-items: center; height: 100%; flex: none; }
      .sel { display: flex; height: 24px; margin: 0 2px 0 5px; box-sizing: border-box; }
      .sel .a { width: 27px; background: #a8a9ab; border: 1px solid #666; display: flex; align-items: center; justify-content: center; box-sizing: border-box; }
      .sel .b { width: 8px; background: #e6e8ea; border: 1px solid #8a8a8a; border-left: 0; display: flex; align-items: center; justify-content: center; box-sizing: content-box; }
      .doc { margin-left: 333px; padding-top: 4px; color: #222; }
      .right { margin-left: auto; display: flex; align-items: center; height: 100%; }
      .search { width: 264px; height: 23px; box-sizing: border-box; border: 1px solid #111; background: #e8eaf0; display: flex; align-items: center; padding-left: 5px; color: #5a6880; }
      .search span { margin-left: 5px; font-size: 12px; flex: 1; }
    `, `
      <div class="logo">
        <svg width="22" height="22" viewBox="0 0 22 22" fill="none" stroke="#fff" stroke-width="1.800"><path d="M3 4c5-2 9-2 8 3-.5 3-4 3-6 3 3 0 6 1 5 5-1 3-5 4-9 3"/><path d="M11 4c4 0 8 1 9 3"/><path d="M13 10c3 1 7 2 6 6-1 3-5 3-8 2"/></svg>
        <span>SOLID<b>WORKS</b></span>
      </div>
      <div class="menu">${menus.map(([t, w]) => `<span style="width:${w}px">${t}</span>`).join("")}<sw-icon name="pin"></sw-icon></div>
      <div class="quick">
        <div class="c" style="width:20px"><sw-icon name="newdoc" size="17"></sw-icon></div><sw-arrow style="width:14px"></sw-arrow>
        <div class="c" style="width:22px"><sw-icon name="open" size="17"></sw-icon></div><sw-arrow style="width:14px"></sw-arrow>
        <div class="c" style="width:22px"><sw-icon name="save" size="17"></sw-icon></div><sw-arrow style="width:14px"></sw-arrow>
        <div class="c" style="width:24px"><sw-icon name="print" size="17"></sw-icon></div><sw-arrow style="width:10px"></sw-arrow>
        <div class="c" style="width:28px"><sw-icon name="undo" size="18"></sw-icon></div><sw-arrow style="width:6px"></sw-arrow>
        <div class="sel"><div class="a"><sw-icon name="cursor" size="17"></sw-icon></div><div class="b"><sw-arrow></sw-arrow></div></div>
        <div class="c" style="width:20px"><sw-icon name="light" size="18"></sw-icon></div>
        <div class="c" style="width:26px"><sw-icon name="options" size="17"></sw-icon></div>
        <div class="c" style="width:20px"><sw-icon name="checklist" size="17"></sw-icon></div><sw-arrow style="width:14px"></sw-arrow>
        <span class="doc">Díl1 *</span>
      </div>
      <div class="right">
        <div class="search"><sw-icon name="terminal"></sw-icon><span>Vyhledat příkazy</span><sw-icon name="search" size="18"></sw-icon><sw-arrow style="width:20px"></sw-arrow></div>
        <div class="c" style="width:26px;margin-left:1px"><sw-icon name="help"></sw-icon></div><sw-arrow style="width:12px"></sw-arrow>
        <div class="c" style="width:22px;margin-left:2px"><sw-icon name="winmin"></sw-icon></div>
        <div class="c" style="width:23px"><sw-icon name="winmax"></sw-icon></div>
        <div class="c" style="width:23px"><sw-icon name="winx"></sw-icon></div>
      </div>`);
  }
}
customElements.define("sw-titlebar", SwTitlebar);

// a large ribbon button: icon on top, two lines of label, optional drop arrow
class SwRbtn extends HTMLElement {
  constructor() {
    super();
    const off = this.hasAttribute("off");
    const low = this.hasAttribute("low");
    const lines = this.getAttribute("label").split("|");
    shadow(this, `
      :host { display: flex; flex-direction: column; align-items: center; flex: none; height: 71px; width: ${this.getAttribute("w")}px; color: ${off ? "#8c9095" : "#000"}; }
      .i { height: ${low ? 24 : 19}px; margin-top: 4px; display: flex; align-items: ${low ? "flex-end" : "center"}; }
      .t { line-height: 13.500px; text-align: center; white-space: nowrap; margin-top: -1px; font-size: ${this.getAttribute("fs") || 12}px; }
      sw-arrow { margin-top: 11px; }
    `, `<div class="i"><sw-icon name="${this.getAttribute("icon")}" size="19"></sw-icon></div>
        <div class="t">${lines.join("<br>")}</div>${this.hasAttribute("menu") ? `<sw-arrow ${off ? "off" : ""}></sw-arrow>` : ""}`);
  }
}
customElements.define("sw-rbtn", SwRbtn);

class SwRibbon extends HTMLElement {
  constructor() {
    super();
    const sk = [["line", 1], ["circle", 1], ["spline", 1], ["dashed", 0], ["rect", 1], ["arc", 1], ["ellipse", 1], ["textA", 0], ["slot", 1], ["poly", 0], ["fillet", 2], ["star", 0]];
    const list = [["mirror", "Zrcadlit entity", 0], ["pattern", "Lineární pole skici", 1], ["moveent", "Přesunout entity", 1]];
    shadow(this, `
      :host { display: flex; width: 1511px; height: 76px; box-sizing: border-box; border-top: 1px solid #f4f5f6; border-bottom: 1px solid #111; padding-top: 1px; background: #d8dadd; flex: none; }
      .sep { width: 1px; height: 65px; margin-top: 3px; background: #555; flex: none; }
      .sk { display: grid; grid-template-columns: 36px 36px 36px 24px; grid-auto-rows: 23px; flex: none; margin-top: -1px; }
      .sk div { display: flex; align-items: center; padding-left: 3px; box-sizing: border-box; }
      .sk sw-arrow { width: 15px; }
      .list { width: 151px; flex: none; display: grid; grid-auto-rows: 23px; margin-top: 1px; color: #8c9095; font-size: 11.400px; }
      .list div { display: flex; align-items: center; }
      .list span { margin-left: 7px; flex: 1; }
      .list sw-arrow { width: 16px; }
    `, `
      <sw-rbtn w="74" icon="sketch" label="Načrtnout|skicu" menu></sw-rbtn>
      <sw-rbtn w="58" icon="dim" label="Inteligentní|kóta" menu></sw-rbtn>
      <div class="sep" style="margin-left:7px"></div>
      <div class="sk">${sk.map(([n, a]) => `<div><sw-icon name="${n}" size="18"></sw-icon>${a ? `<sw-arrow ${a === 2 ? "off" : ""}></sw-arrow>` : ""}</div>`).join("")}</div>
      <div class="sep"></div>
      <sw-rbtn w="60" off icon="trim" label="Oříznout|entity" menu></sw-rbtn>
      <sw-rbtn w="42" icon="convert" label="Převést|entity" menu></sw-rbtn>
      <sw-rbtn w="55" off low icon="offset" label="Odsadit|entity"></sw-rbtn>
      <div class="list">${list.map(([n, t, a]) => `<div><sw-icon name="${n}"></sw-icon><span>${t}</span>${a ? "<sw-arrow off></sw-arrow>" : ""}</div>`).join("")}</div>
      <div class="sep"></div>
      <sw-rbtn w="104" off fs="11.400" icon="relations" label="Zobrazit/odstranit|vazby" menu></sw-rbtn>
      <sw-rbtn w="50" off low icon="repair" label="Opravit|skicu"></sw-rbtn>
      <div class="sep"></div>
      <sw-rbtn w="70" off fs="11.400" icon="snap" label="Rychlá|zachytávání" menu></sw-rbtn>
      <div class="sep"></div>
      <sw-rbtn w="46" low icon="rapid" label="Rychlá|skica"></sw-rbtn>`);
  }
}
customElements.define("sw-ribbon", SwRibbon);

class SwFilterbar extends HTMLElement {
  constructor() {
    super();
    const names = ["fvertex", "fedge", "fface", "fflag", "fbody", "faxis", "fplane", "fstar", "fsketch", "fpath"];
    shadow(this, `
      :host { display: block; flex: 1; height: 76px; box-sizing: border-box; background: #d8dadd; border-left: 2px solid #6a6c70; }
      .bar { display: flex; align-items: center; height: 31px; border-bottom: 1px solid #9a9c9f; box-shadow: 0 1px 0 #f4f5f6; }
      .g { width: 3px; height: 24px; margin: 0 5px 0 2px; background: repeating-linear-gradient(#333 0 1px, transparent 1px 4px); flex: none; }
      .c { display: flex; justify-content: center; align-items: center; flex: none; }
      .sel { display: flex; width: 38px; height: 23px; flex: none; box-sizing: border-box; }
      .sel .a { flex: 1; background: #a8a9ab; border: 1px solid #666; display: flex; align-items: center; justify-content: center; }
      .sel .b { width: 13px; background: #e6e8ea; border: 1px solid #8a8a8a; display: flex; align-items: center; justify-content: center; }
      .s { width: 1px; height: 20px; background: #6a6c70; margin: 0 6px 0 5px; flex: none; }
      .more { width: 24px; text-align: center; color: #666; font: 700 14px "DejaVu Sans", sans-serif; flex: none; }
    `, `<div class="bar">
        <div class="g"></div>
        <div class="c" style="width:24px"><sw-icon name="fgrey"></sw-icon></div>
        <div class="c" style="width:24px"><sw-icon name="fgrey2"></sw-icon></div>
        <div class="c" style="width:24px"><sw-icon name="fblue"></sw-icon></div>
        <div class="sel"><div class="a"><sw-icon name="cursor" size="17"></sw-icon></div><div class="b"><sw-arrow></sw-arrow></div></div>
        <div class="c" style="width:18px"><sw-icon name="cursorg"></sw-icon></div>
        <div class="s"></div>
        ${names.map(n => `<div class="c" style="width:23.300px"><sw-icon name="${n}" size="17"></sw-icon></div>`).join("")}
        <div class="more">»</div>
      </div>`);
  }
}
customElements.define("sw-filterbar", SwFilterbar);

class SwTabs extends HTMLElement {
  constructor() {
    super();
    const tabs = [["Prvky", 57], ["Skica", 55, 1], ["Analýzy", 58], ["DimXpert", 66], ["Doplňkové moduly SOLIDWORKS", 190]];
    shadow(this, `
      :host { display: flex; align-items: flex-start; height: 21px; position: relative; z-index: 2; background: #d6d8dc; width: 342px; }
      div { flex: none; height: 20px; box-sizing: border-box; border: 1px solid #2a2a2a; border-top: 0; background: #a9aaac; text-align: center; line-height: 19px; color: #111; }
      div.on { height: 22px; background: linear-gradient(#f2f3f5, #e2e5ea); font-weight: 700; border-color: #777; box-shadow: 0 1px 0 #555; }
    `, tabs.map(([t, w, on]) => `<div class="${on ? "on" : ""}" style="width:${w}px">${t}</div>`).join(""));
  }
}
customElements.define("sw-tabs", SwTabs);

class SwGrip extends HTMLElement {
  constructor() {
    super();
    shadow(this, `
      :host { display: flex; align-items: center; justify-content: center; height: 15px; flex: none; }
      i { width: 36px; height: 2px; background: repeating-linear-gradient(90deg, #333 0 2px, transparent 2px 4px); }
    `, "<i></i>");
  }
}
customElements.define("sw-grip", SwGrip);

class SwRule extends HTMLElement {
  constructor() {
    super();
    const wide = this.hasAttribute("wide");
    shadow(this, `:host { display: block; height: 1px; flex: none; background: ${wide ? "#f0f1f3" : "#85888c"}; margin-left: ${wide ? 0 : 5}px; margin-right: ${wide ? 0 : 2}px; }`, "");
  }
}
customElements.define("sw-rule", SwRule);

class SwTool extends HTMLElement {
  constructor() {
    super();
    shadow(this, `
      :host { display: flex; align-items: center; height: 23px; flex: none; padding-left: 6px; }
      sw-arrow { width: 16px; margin-left: 1px; }
    `, `<sw-icon name="${this.getAttribute("name")}" size="17"></sw-icon>${this.hasAttribute("menu") ? "<sw-arrow></sw-arrow>" : ""}`);
  }
}
customElements.define("sw-tool", SwTool);

class SwRail extends HTMLElement {
  constructor() {
    super();
    shadow(this, `:host { display: flex; flex-direction: column; background: #d6d8dc; overflow: hidden; }`, "<slot></slot>");
  }
}
customElements.define("sw-rail", SwRail);

class SwTreeRow extends HTMLElement {
  constructor() {
    super();
    const root = this.hasAttribute("root");
    const plus = this.hasAttribute("plus");
    const last = this.hasAttribute("last");
    shadow(this, `
      :host { display: flex; align-items: center; height: 18px; color: ${this.hasAttribute("muted") ? "#8c8f94" : "#000"}; white-space: pre; }
      .g { position: relative; width: 20px; height: 18px; flex: none; }
      .g::before { content: ""; position: absolute; left: 10px; top: 0; ${last ? "height: 9px" : "bottom: 0"}; border-left: 1px dotted #666; }
      .g::after { content: ""; position: absolute; left: 10px; right: 0; top: 9px; border-top: 1px dotted #666; }
      .p { position: absolute; left: 6px; top: 5px; width: 7px; height: 7px; border: 1px solid #8a9098; background: #f6f7f8; z-index: 1; }
      .p::before { content: ""; position: absolute; left: 1px; right: 1px; top: 3px; height: 1px; background: #111; }
      .p::after { content: ""; position: absolute; top: 1px; bottom: 1px; left: 3px; width: 1px; background: #111; }
      sw-icon { margin-right: 5px; }
      sw-icon.root { margin: 0 5px 0 2px; }
      .sel { background: #3399ff; color: #fff; padding: 0 2px; margin-left: -2px; line-height: 14px; letter-spacing: -.2px; }
    `, root
      ? `<sw-icon class="root" name="${this.getAttribute("icon")}" size="17"></sw-icon><span class="sel">${this.getAttribute("label")}</span>`
      : `<div class="g">${plus ? '<div class="p"></div>' : ""}</div><sw-icon name="${this.getAttribute("icon")}" size="17"></sw-icon><span>${this.getAttribute("label")}</span>`);
  }
}
customElements.define("sw-tree-row", SwTreeRow);

class SwTree extends HTMLElement {
  constructor() {
    super();
    const tabs = [["part", 1], ["options"], ["tConfig"], ["tTarget"], ["appear"]];
    shadow(this, `
      :host { display: block; background: #e2e5ea; box-shadow: inset 0 2px 0 #a6a8ab; overflow: hidden; }
      .tabs { display: flex; gap: 2px; height: 21px; margin-top: 8px; padding-bottom: 0; box-sizing: border-box; border-bottom: 1px solid #222; position: relative; }
      .tabs div { width: 26px; height: 21px; flex: none; box-sizing: border-box; border: 1px solid #222; border-bottom: 0; background: #a8a9ab; display: flex; align-items: center; justify-content: center; }
      .tabs div.on { background: #f2f4f6; border-color: #f2f4f6; height: 22px; }
      .more { margin-left: auto; margin-right: 3px; font: 700 14px "DejaVu Sans", sans-serif; color: #222; line-height: 18px; }
      .filter { height: 17px; margin: 2px 1px 5px 1px; box-sizing: border-box; border: 1px solid #555; background: #f0f1f3; display: flex; align-items: center; padding-left: 7px; }
      .blue { height: 2px; background: #1f6fb5; margin-top: 1px; }
    `, `<div class="tabs">${tabs.map(([n, on]) => `<div class="${on ? "on" : ""}"><sw-icon name="${n}" size="17"></sw-icon></div>`).join("")}<span class="more">»</span></div>
        <div class="filter"><sw-icon name="fieldfilter" size="13"></sw-icon></div>
        <slot></slot>
        <div class="blue"></div>`);
  }
}
customElements.define("sw-tree", SwTree);

class SwViewport extends HTMLElement {
  constructor() {
    super();
    const hud = [["zfit", 22], ["zarea", 24], ["prevview", 23], ["sectionv", 22], ["orient", 21], [0, 18], ["display", 19], [0, 19], ["glasses", 18], [0, 18], ["appear", 21], ["scene", 21], [0, 18], ["viewset", 19], [0, 18]];
    const pane = ["home", "books", "folder", "design", "ballsh", "options"];
    shadow(this, `
      :host { display: block; position: relative; background: #c1daf3; overflow: hidden; border-left: 2px solid #222; box-sizing: border-box; }
      svg.model { position: absolute; left: 0; top: 0; }
      .hud { position: absolute; left: 635px; top: 5px; display: flex; height: 18px; align-items: center; }
      .hud div { display: flex; justify-content: center; flex: none; }
      .win { position: absolute; right: 6px; top: 5px; display: flex; height: 18px; align-items: center; }
      .win div { width: 23px; display: flex; justify-content: center; }
      .pane { position: absolute; right: 0; top: 60px; width: 24px; border-top: 1px solid #222; }
      .pane div { height: 24px; box-sizing: border-box; background: #a8a9ab; border: 1px solid #222; border-top: 0; border-right: 0; box-shadow: inset 1px 1px 0 #ddd; display: flex; align-items: center; justify-content: center; }
      .pane div.on { background: #eceef0; }
      .handle { position: absolute; left: -1px; top: 511px; width: 7px; height: 37px; background: #fff; border: 1px solid #222; border-left: 0; }
      .label { position: absolute; left: 12px; bottom: 3px; font: 700 12px "DejaVu Sans", sans-serif; color: #111; }
      svg.triad { position: absolute; left: 10px; top: 967px; overflow: visible; }
    `, `
      <svg class="model" width="1578" height="1059" viewBox="342 105 1578 1059">
        <defs>
          <linearGradient id="bend" gradientUnits="userSpaceOnUse" x1="575" y1="1000" x2="583" y2="1014">
            <stop offset="0" stop-color="#5c5c5c"/><stop offset=".55" stop-color="#8a8a8a"/><stop offset="1" stop-color="#8a8a8a"/>
          </linearGradient>
          <linearGradient id="strip" gradientUnits="userSpaceOnUse" x1="570" y1="802" x2="577" y2="813">
            <stop offset="0" stop-color="#6a6a6a"/><stop offset="1" stop-color="#8a8a8a"/>
          </linearGradient>
        </defs>
        <g stroke="#111" stroke-width="1.500" stroke-linejoin="round">
          <!-- web -->
          <path d="M570.700 825L580 819.500 1612.300 313V400L570.700 1000Z" fill="#575757"/>
          <!-- outer left band -->
          <path d="M561.300 815V995L570.700 1000V825Z" fill="#7a7a7a"/>
          <!-- bottom bend -->
          <path d="M570.700 1000L1612.300 400Q1612 410 1621 416L580.700 1016.700Q571 1012 570.700 1000Z" fill="url(#bend)"/>
          <path d="M561.300 995Q562 1017 580.700 1027.300V1016.700Q571 1012 570.700 1000Z" fill="#6a6a6a"/>
          <!-- bottom flange -->
          <path d="M580.700 1016.700L1621 416 1697.700 459.300 656 1060Z" fill="#8a8a8a"/>
          <path d="M580.700 1016.700L656 1060V1071L580.700 1027.300Z" fill="#6e6e6e"/>
          <path d="M656 1060L1697.700 459.300V471.700L656 1071Z" fill="#5f5f5f"/>
          <!-- top flange -->
          <path d="M570 806L1608 206Q1616 203 1621 208.300L580.700 809.300Q576 804 570 806Z" fill="url(#strip)"/>
          <path d="M561.300 815Q561 808 570 806 576 804 580.700 809.300V819.500Q574 815 570.700 825Z" fill="#7a7a7a"/>
          <path d="M580.700 809.300L1621 208.300 1697.700 251 656 851.700Z" fill="#8a8a8a"/>
          <path d="M580.700 809.300L656 851.700V864L580.700 819.500Z" fill="#6e6e6e"/>
          <path d="M656 851.700L1697.700 251V263.300L656 864Z" fill="#5f5f5f"/>
        </g>
      </svg>
      <div class="hud">${hud.map(([n, w]) => n ? `<div style="width:${w}px"><sw-icon name="${n}" size="17"></sw-icon></div>` : `<sw-arrow off style="width:${w}px"></sw-arrow>`).join("")}</div>
      <div class="win">${["panelL", "panelR", "winmin", "winmax", "winx"].map(n => `<div><sw-icon name="${n}"></sw-icon></div>`).join("")}</div>
      <div class="pane">${pane.map((n, i) => `<div class="${i ? "" : "on"}"><sw-icon name="${n}" size="16"></sw-icon></div>`).join("")}</div>
      <div class="handle"><svg width="7" height="37" viewBox="0 0 7 37" fill="none" stroke="#222"><path d="M5 4L2 7l3 3M5 27l-3 3 3 3"/><path d="M4 14v9" stroke-dasharray="1 1.500"/></svg></div>
      <svg class="triad" width="64" height="60" viewBox="0 0 64 60">
        <path d="M30 30V14" stroke="#0f6a1e" stroke-width="4"/><path d="M30 6l4 9h-8z" fill="#0f7a22"/>
        <path d="M30 30L14 40" stroke="#1a1a9a" stroke-width="4"/><path d="M6 44l6-8 5 7z" fill="#1a1ac8"/>
        <path d="M30 30L46 40" stroke="#a01a1a" stroke-width="4"/><path d="M53 44l-10 0 4-8z" fill="#d01a1a"/>
        <text x="30" y="5" font-size="11" text-anchor="middle" fill="#0a9a1a" font-family="Liberation Sans">Y</text>
        <text x="1" y="50" font-size="11" fill="#1a1ae8" font-family="Liberation Sans">Z</text>
        <text x="52" y="50" font-size="11" fill="#e81a1a" font-family="Liberation Sans">X</text>
      </svg>
      <div class="label">*Izometrická</div>`);
  }
}
customElements.define("sw-viewport", SwViewport);

class SwBottomtabs extends HTMLElement {
  constructor() {
    super();
    shadow(this, `
      :host { display: flex; height: 15px; box-sizing: border-box; border-top: 1px solid #111; background: #e2e5ea; }
      .nav { display: flex; width: 66px; margin: 0 2px 0 1px; background: #a9aaac; }
      .nav i { flex: 1; border-right: 1px solid #d0d1d3; display: flex; align-items: center; justify-content: center; color: #8a8b8d; font: 9px "DejaVu Sans", sans-serif; }
      .t { height: 14px; line-height: 13px; text-align: center; box-sizing: border-box; border: 1px solid #333; border-top: 0; flex: none; }
      .m { width: 55px; font-weight: 700; background: #e8eaee; }
      .p { width: 120px; background: #a9aaac; }
    `, `<div class="nav"><i>◀</i><i>◀</i><i>▶</i><i>▶</i></div><div class="t m">Model</div><div class="t p">Pohybová studie 1</div>`);
  }
}
customElements.define("sw-bottomtabs", SwBottomtabs);

class SwStatus extends HTMLElement {
  constructor() {
    super();
    shadow(this, `
      :host { display: flex; align-items: center; height: 21px; box-sizing: border-box; border-top: 1px solid #111; background: linear-gradient(#d8dadd, #cfd1d5); padding-left: 2px; }
      span { flex: none; }
      .r { margin-left: auto; display: flex; align-items: center; }
    `, `<span>SOLIDWORKS Premium 2015 x64 Edition</span>
      <div class="r">
        <span style="width:80px">Plně určený</span><span style="width:105px">Úprava Díl</span><span style="width:50px">Vlastní</span>
        <sw-arrow up style="width:14px"></sw-arrow>
        <sw-icon name="question" size="14" style="margin:0 56px 0 10px"></sw-icon>
        <sw-icon name="tag" size="16" style="margin-right:8px"></sw-icon>
      </div>`);
  }
}
customElements.define("sw-status", SwStatus);

class SwApp extends HTMLElement {
  constructor() {
    super();
    shadow(this, `
      :host { display: grid; width: 1920px; height: 1200px; overflow: hidden;
        grid-template-columns: 43px 297px 1fr;
        grid-template-rows: 29px 76px 21px 1038px 15px 21px; }
      .title { grid-column: 1 / -1; grid-row: 1; display: grid; }
      .ribbon { grid-column: 1 / -1; grid-row: 2; display: flex; }
      .tabs { grid-column: 1 / 3; grid-row: 3; display: grid; position: relative; z-index: 2; }
      .rail { grid-column: 1; grid-row: 4 / 6; display: grid; min-height: 0; }
      .tree { grid-column: 2; grid-row: 4; display: grid; min-height: 0; }
      .view { grid-column: 3; grid-row: 3 / 5; display: grid; min-height: 0; }
      .bottom { grid-column: 2 / -1; grid-row: 5; display: grid; }
      .status { grid-column: 1 / -1; grid-row: 6; display: grid; }
    `, `<div class="title"><slot name="title"></slot></div>
        <div class="ribbon"><slot name="ribbon"></slot><slot name="filter"></slot></div>
        <div class="tabs"><slot name="tabs"></slot></div>
        <div class="rail"><slot name="rail"></slot></div>
        <div class="tree"><slot name="tree"></slot></div>
        <div class="view"><slot name="view"></slot></div>
        <div class="bottom"><slot name="bottom"></slot></div>
        <div class="status"><slot name="status"></slot></div>`);
  }
}
customElements.define("sw-app", SwApp);
</script>
</body>
</html>
